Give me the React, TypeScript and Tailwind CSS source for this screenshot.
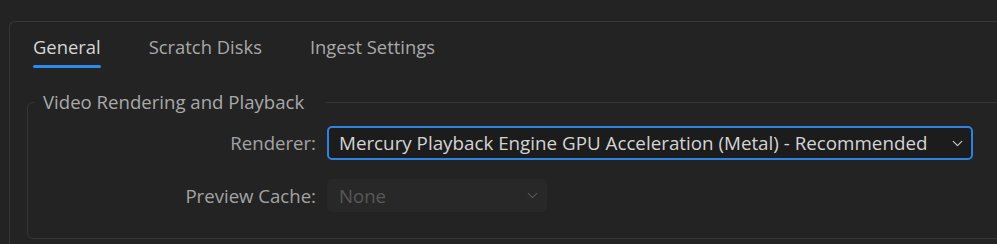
import { ChevronDown } from "lucide-react"

const font = { fontFamily: '"Open Sans", "Noto Sans", sans-serif' }

function Tab({ label, active }: { label: string; active?: boolean }) {
  return (
    <div className="flex flex-col items-stretch">
      <span className={`text-[18.4px] leading-[24px] ${active ? "text-[#d6d6d6]" : "text-[#a9a9a9]"}`}>{label}</span>
      <span className={`mt-[6px] h-[3px] rounded-full ${active ? "bg-[#2d8ceb]" : "bg-transparent"}`} />
    </div>
  )
}

export default function App() {
  return (
    <div className="w-[997px] h-[244px] overflow-hidden bg-[#232323] pt-[21px] pl-[9px]" style={font}>
      <div className="w-[1100px] h-[300px] rounded-tl-[6px] border-l border-t border-[#363636]">
        <div className="flex gap-[48px] pl-[23px] pt-[13px]">
          <Tab label="General" active />
          <Tab label="Scratch Disks" />
          <Tab label="Ingest Settings" />
        </div>

        <fieldset className="ml-[17px] mt-[22px] w-[1000px] h-[149px] rounded-[6px] border border-[#363636] pl-0">
          <legend className="ml-[6px] pl-[9px] pr-[22px] text-[18.6px] leading-[24px] text-[#a9a9a9]">
            Video Rendering and Playback
          </legend>

          <div className="mt-[12px] grid grid-cols-[288px_auto] items-center gap-x-[11px] gap-y-[19px]">
            <span className="text-right text-[18.6px] text-[#a3a3a3]">Renderer:</span>
            <div className="flex h-[34px] w-[646px] items-center justify-between rounded-[5px] border-2 border-[#2c83e4] bg-[#1c1c1c] pl-[10px] pr-[5px]">
              <span className="text-[18.8px] text-[#d4d4d4]">Mercury Playback Engine GPU Acceleration (Metal) - Recommended</span>
              <ChevronDown size={17} strokeWidth={1.75} className="text-[#c4c4c4]" />
            </div>

            <span className="text-right text-[18.6px] text-[#a3a3a3]">Preview Cache:</span>
            <div className="flex h-[33px] w-[220px] items-center justify-between rounded-[5px] bg-[#282828] pl-[12px] pr-[6px]">
              <span className="text-[18.6px] text-[#585858]">None</span>
              <ChevronDown size={17} strokeWidth={1.75} className="text-[#555555]" />
            </div>
          </div>
        </fieldset>
      </div>
    </div>
  )
}
